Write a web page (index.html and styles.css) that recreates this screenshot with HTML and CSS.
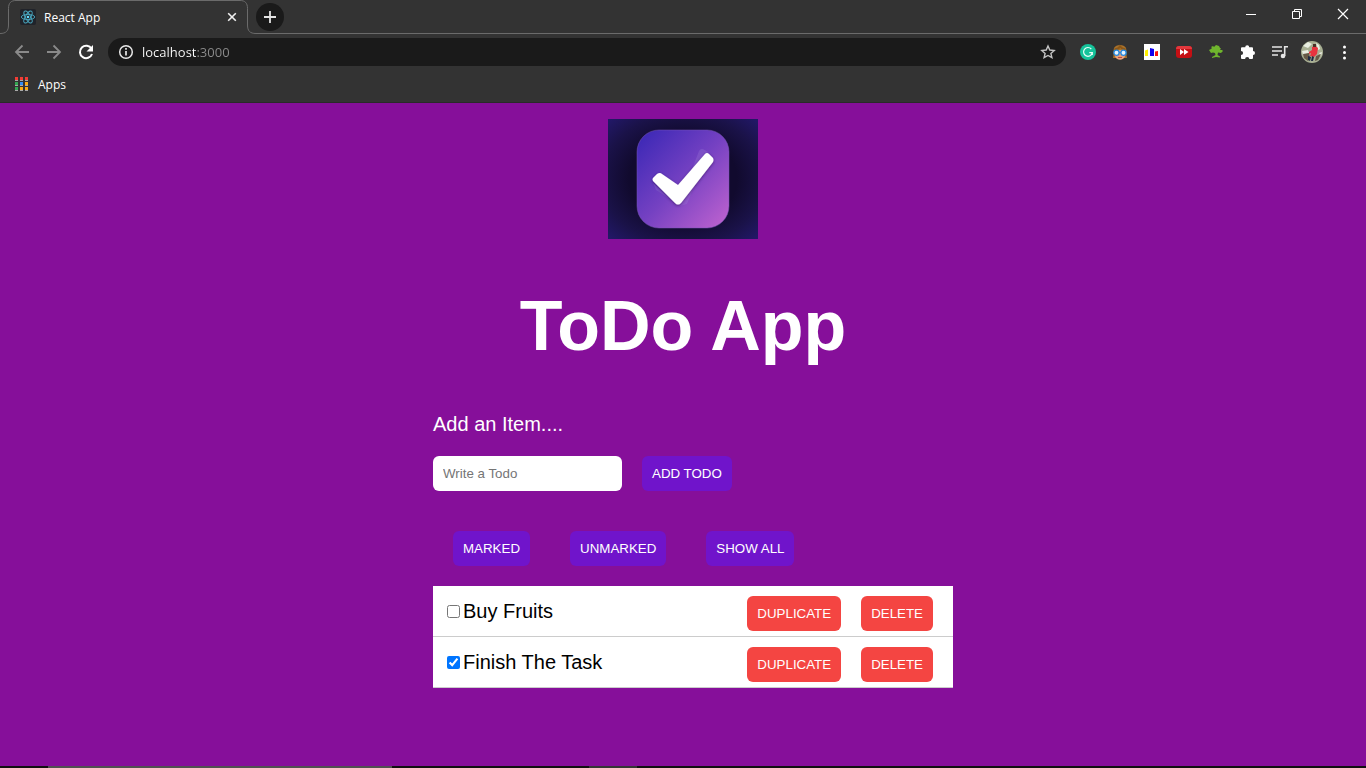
FILE: index.html
```html
<!DOCTYPE html>
<html lang="en">
<head>
<meta charset="utf-8">
<title>React App</title>
<link rel="stylesheet" href="styles.css">
</head>
<body>
<header class="browser">
  <div class="tabstrip">
    <div class="tab">
      <svg class="tab-shape" width="256" height="34" viewBox="0 0 256 34" fill="none" stroke="#6b6b6b"><path d="M0 33.5C6 33.5 8.500 31 8.500 25V8.500C8.500 3 11 .5 16 .5H240C245 .5 247.500 3 247.500 8.500V25C247.500 31 250 33.500 256 33.500"/></svg>
      <svg class="tab-icon" width="16" height="16" viewBox="0 0 16 16"><rect width="16" height="16" rx="2" fill="#20232a"/><g fill="none" stroke="#4aa9c2" stroke-width=".9"><ellipse cx="8" cy="8" rx="6.700" ry="2.600"/><ellipse cx="8" cy="8" rx="6.700" ry="2.600" transform="rotate(60 8 8)"/><ellipse cx="8" cy="8" rx="6.700" ry="2.600" transform="rotate(120 8 8)"/></g><circle cx="8" cy="8" r="1.300" fill="#61dafb"/></svg>
      <span class="tab-title">React App</span>
      <button class="tab-close" aria-label="Close tab"><svg width="16" height="16" viewBox="0 0 16 16" stroke="#f1f1f1" stroke-width="1.600"><path d="M4.200 4.200l7.600 7.600M11.800 4.200l-7.600 7.600"/></svg></button>
    </div>
    <div class="strip-rest">
      <button class="new-tab" aria-label="New tab"><svg width="16" height="16" viewBox="0 0 16 16" stroke="#e4e4e4" stroke-width="1.800"><path d="M8 2v12M2 8h12"/></svg></button>
      <div class="window-controls">
        <button class="win" aria-label="Minimize"><svg width="12" height="12" viewBox="0 0 12 12" stroke="#fff"><path d="M1 6.500h10"/></svg></button>
        <button class="win" aria-label="Restore"><svg width="12" height="12" viewBox="0 0 12 12" fill="none" stroke="#fff"><path d="M1.500 3.500h7v7h-7zM3.500 3.500v-2h7v7h-2"/></svg></button>
        <button class="win" aria-label="Close"><svg width="12" height="12" viewBox="0 0 12 12" stroke="#fff" stroke-width="1.200"><path d="M1 1l10 10M11 1L1 11"/></svg></button>
      </div>
    </div>
  </div>
  <div class="toolbar">
    <button class="tool" aria-label="Back"><svg width="16" height="16" viewBox="0 0 16 16" fill="none" stroke="#8a8a8a" stroke-width="1.800"><path d="M15 8H2M8.500 1.500L2 8l6.500 6.500"/></svg></button>
    <button class="tool" aria-label="Forward"><svg width="16" height="16" viewBox="0 0 16 16" fill="none" stroke="#8a8a8a" stroke-width="1.800"><path d="M1 8h13M7.500 1.500L14 8l-6.500 6.500"/></svg></button>
    <button class="tool" aria-label="Reload"><svg width="16" height="16" viewBox="0 0 16 16"><path d="M13.500 4.800A6.200 6.200 0 1 0 14 10" fill="none" stroke="#fff" stroke-width="2"/><path d="M15 1v6.500H8.500z" fill="#fff"/></svg></button>
    <div class="omnibox">
      <svg width="16" height="16" viewBox="0 0 16 16" fill="none" stroke="#e8e8e8"><circle cx="8" cy="8" r="6.300" stroke-width="1.500"/><path d="M8 7v4.500M8 4v1.700" stroke-width="1.700"/></svg>
      <input class="address" type="text" aria-label="Address" value="localhost:3000">
      <button class="star" aria-label="Bookmark this page"><svg width="16" height="16" viewBox="0 0 16 16" fill="none" stroke="#c4c4c4" stroke-width="1.400"><path d="M8 2l1.800 4 4.400.5-3.300 2.900 1 4.300L8 11.500l-3.900 2.200 1-4.300L1.800 6.500 6.200 6z"/></svg></button>
    </div>
    <button class="tool" aria-label="Grammarly"><svg width="16" height="16" viewBox="0 0 16 16"><circle cx="8" cy="8" r="8" fill="#15c39a"/><path d="M11.300 5A4.400 4.400 0 1 0 12.300 8.700H9.300M12.300 8.500v2.500" fill="none" stroke="#e8fff8" stroke-width="1.200"/></svg></button>
    <button class="tool" aria-label="Glasses extension"><svg width="16" height="16" viewBox="0 0 16 16"><path d="M1 14C2 10 1 7 2 4 4 0 12 0 14 4c1 3 0 6 1 10z" fill="#a8702a"/><path d="M3 6h10v6c-1 5-9 5-10 0z" fill="#e8a27a"/><path d="M2.500 5.500C5 5 7 4.500 8 2.500 9 4 11 5 13.500 5.500" stroke="#8a5718" stroke-width="2" fill="none"/><g fill="#e6f4ff" stroke="#2288df" stroke-width="1.300"><circle cx="4.500" cy="8.700" r="2.600"/><circle cx="11.500" cy="8.700" r="2.600"/></g><path d="M7 8.500h2" stroke="#2288df"/><path d="M6 13.500h4" stroke="#b84b43"/></svg></button>
    <button class="tool" aria-label="Charts extension"><svg width="16" height="16" viewBox="0 0 16 16"><path fill="#fff" d="M0 0h16v16H0z"/><path fill="#ffef00" d="M1 6.500l3-1V12H1z"/><path fill="#1100ef" d="M6 4l4 1v7H6z"/><path fill="#fa1111" d="M11 7.500l3-.5v5h-3z"/></svg></button>
    <button class="tool" aria-label="Skip extension"><svg width="16" height="16" viewBox="0 0 16 16"><rect y="2" width="16" height="12" rx="3" fill="#c50f14"/><path d="M0 5q0-3 3-3h10q3 0 3 3z" fill="#e2383d"/><path fill="#fff" d="M4 5l4 3-4 3zM8 5l4.500 3L8 11z"/></svg></button>
    <button class="tool" aria-label="Tree extension"><svg width="16" height="16" viewBox="0 0 16 16" fill="#6fb52d"><path d="M1 6l2-1 1-1-1-1 2-1 1 1 2-2 3 1 1 2 1 .5L12 6l2 0 1 1-2 2-3-.5L9.500 11l2.500 1.500v1L8 13l-4 1v-1l3.500-2L7 9 5 8.500 3 9 2 7.500z"/></svg></button>
    <button class="tool" aria-label="Extensions"><svg width="16" height="16" viewBox="0 0 16 16" fill="#fff"><path d="M5.200 3.200a2 2 0 0 1 4 0H12q1 0 1 1v2.700a2 2 0 0 1 0 4V14q0 1-1 1H9.300a2.100 2.100 0 0 0-4.200 0H2q-1 0-1-1v-2.900a2.100 2.100 0 0 0 0-4.200V4.200q0-1 1-1z"/></svg></button>
    <button class="tool" aria-label="Media control"><svg width="18" height="16" viewBox="0 0 18 16" fill="none" stroke="#e6e6e6" stroke-width="1.600"><path d="M1 3h10M1 7h10M1 11h6M13.700 12V2.800H17"/><circle cx="12" cy="12" r="2.300" fill="#e6e6e6" stroke="none"/></svg></button>
    <button class="tool" aria-label="Profile"><svg width="22" height="22" viewBox="0 0 22 22"><circle cx="11" cy="11" r="11" fill="#a9b094"/><path d="M2 5l5-4 4 2-4 4zM15 2l3 2 1 4-2 1zM1 10l6-1 1 3-6 2zM18 12l3-1-1 4z" fill="#e9eee2"/><path d="M2 13l6-1 1 5-2 3-4-3zM15 15l5-2-3 6-3 1z" fill="#665946"/><path d="M11 6l3-1 3 2-1 6-3 3-4-1 1-3-2 1 0-2 3-2z" fill="#e8333e"/><path d="M12 3h3v3h-3z" fill="#493027"/><path d="M7 15l3 1-1 4-2-1zM11 15l2 1-1 4h-2z" fill="#1e2a42"/></svg></button>
    <button class="tool" aria-label="Menu"><svg width="16" height="16" viewBox="0 0 16 16" fill="#fff"><circle cx="8.500" cy="3" r="1.500"/><circle cx="8.500" cy="8.500" r="1.500"/><circle cx="8.500" cy="14" r="1.500"/></svg></button>
  </div>
  <nav class="bookmarks">
    <a class="bookmark" href="#"><svg width="14" height="14" viewBox="0 0 14 14"><path fill="#f23d35" d="M0 0h3v3H0zM5 0h3v3H5zM10 0h3v3h-3z"/><path fill="#a9a9a9" d="M0 3h3v1H0zM5 3h3v1H5zM10 3h3v1h-3zM0 8h3v1H0zM5 8h3v1H5zM10 8h3v1h-3zM0 13h3v1H0zM5 13h3v1H5zM10 13h3v1h-3z"/><path fill="#34a853" d="M0 5h3v3H0zM0 10h3v3H0z"/><path fill="#2e8df5" d="M5 5h3v3H5z"/><path fill="#f9ab12" d="M10 5h3v3h-3zM5 10h3v3H5zM10 10h3v3h-3z"/></svg>Apps</a>
  </nav>
</header>
<main class="page">
  <svg class="logo" width="150" height="120" viewBox="0 0 150 120" role="img" aria-label="Todo logo">
    <defs>
      <radialGradient id="night" cx=".5" cy=".5" r=".72"><stop offset=".5" stop-color="#110a2e"/><stop offset=".75" stop-color="#1a1248"/><stop offset="1" stop-color="#23196c"/></radialGradient>
      <linearGradient id="tile" x1="0" y1="0" x2="1" y2="1"><stop offset="0" stop-color="#3726b5"/><stop offset=".5" stop-color="#7541c2"/><stop offset="1" stop-color="#c264d0"/></linearGradient>
      <filter id="shade" x="-20%" y="-20%" width="140%" height="150%"><feDropShadow dx="0" dy="1" stdDeviation="1.500" flood-color="#26104e" flood-opacity=".6"/></filter>
    </defs>
    <path fill="url(#night)" d="M0 0h150v120H0z"/>
    <rect x="29" y="11" width="92" height="98" rx="22" fill="url(#tile)" stroke="#7a55b8" stroke-opacity=".5"/>
    <path d="M81 58L91 32q2-3 4-2l5 3L79 85l-7 2zM45 64l3 7 14 9z" fill="#a98be0" opacity=".22"/>
    <path d="M45 62q-1-2 0-3l4-4q3-2 5 0l16 11 27-31q2-2 4 0l4 4q1 2 0 4L73 84q-3 3-6 0z" fill="#fff" filter="url(#shade)"/>
  </svg>
  <h1 class="title">ToDo App</h1>
  <div class="todo">
    <form class="add" onsubmit="return false">
      <label class="add-label" for="item">Add an Item....</label>
      <div class="add-row">
        <input class="add-input" id="item" type="text" placeholder="Write a Todo">
        <button class="btn" type="submit">ADD TODO</button>
      </div>
    </form>
    <div class="filters">
      <button class="btn">MARKED</button>
      <button class="btn">UNMARKED</button>
      <button class="btn">SHOW ALL</button>
    </div>
    <ul class="list">
      <li class="item">
        <label class="item-label"><input class="check" type="checkbox">Buy Fruits</label>
        <div class="actions"><button class="btn btn-red">DUPLICATE</button><button class="btn btn-red">DELETE</button></div>
      </li>
      <li class="item">
        <label class="item-label"><input class="check" type="checkbox" checked>Finish The Task</label>
        <div class="actions"><button class="btn btn-red">DUPLICATE</button><button class="btn btn-red">DELETE</button></div>
      </li>
    </ul>
  </div>
</main>
<footer class="taskbar"><span class="task-search"></span><span class="task-active"></span></footer>
</body>
</html>
```
FILE: styles.css
```css
* { box-sizing: border-box; }

body {
  margin: 0;
  min-height: 100vh;
  display: flex;
  flex-direction: column;
  background: #860f9a;
  font-family: "Liberation Sans", Arial, sans-serif;
}

button {
  border: 0;
  padding: 0;
  background: none;
  font-family: inherit;
}

svg { display: block; flex: none; }

/* Browser frame */
.browser {
  background: #333333;
  color: #ffffff;
  border-bottom: 1px solid #2a2a2a;
  font-family: "Open Sans", "Noto Sans", sans-serif;
  font-size: 12px;
}

.tabstrip { display: flex; height: 34px; }

.tab {
  position: relative;
  display: flex;
  align-items: center;
  width: 256px;
  padding: 0 16px 0 20px;
  gap: 8px;
}

.tab-shape { position: absolute; left: 0; top: 0; }
.tab-title { flex: 1; }
.tab-close, .new-tab, .win, .tool, .star {
  display: flex;
  align-items: center;
  justify-content: center;
}

.strip-rest {
  flex: 1;
  display: flex;
  justify-content: space-between;
  border-bottom: 1px solid #6b6b6b;
}

.new-tab {
  width: 28px;
  height: 28px;
  margin-top: 3px;
  border-radius: 50%;
  background: #1a1a1a;
}

.window-controls { display: flex; height: 28px; }
.win { width: 46px; }

.toolbar {
  display: flex;
  align-items: center;
  height: 36px;
  padding: 0 6px;
}

.tool { width: 32px; height: 28px; }

.omnibox {
  flex: 1;
  display: flex;
  align-items: center;
  gap: 8px;
  height: 28px;
  margin: 0 6px;
  padding: 0 10px;
  border-radius: 14px;
  background: #1a1a1a;
}

.address {
  flex: 1;
  min-width: 0;
  border: 0;
  padding: 0;
  outline: 0;
  font: 13px/20px "Open Sans", "Noto Sans", sans-serif;
  color: transparent;
  background: linear-gradient(90deg, #ffffff 54px, #8c8c8c 54px);
  background-clip: text;
  -webkit-background-clip: text;
}

.bookmarks {
  display: flex;
  align-items: center;
  height: 28px;
  margin-bottom: 4px;
  padding: 0 15px;
}

.bookmark {
  display: flex;
  align-items: center;
  gap: 9px;
  color: #ffffff;
  text-decoration: none;
}

/* Todo app */
.page {
  flex: 1;
  display: flex;
  flex-direction: column;
  align-items: center;
  padding: 16px 20px 0;
  color: #ffffff;
}

.title {
  margin: 47px 0;
  font-size: 70px;
  line-height: 80px;
}

.todo { width: 100%; max-width: 500px; }

.add-label {
  display: block;
  margin-bottom: 20px;
  font-size: 20px;
  line-height: 23px;
}

.add-row { display: flex; gap: 20px; }

.add-input {
  width: 189px;
  height: 35px;
  border: 0;
  border-radius: 6px;
  padding: 10px;
  font-family: inherit;
}

.btn {
  height: 35px;
  padding: 0 10px;
  border-radius: 6px;
  background: #7014cb;
  color: #ffffff;
}

.btn-red { background: #f44542; }

.filters {
  display: flex;
  gap: 40px;
  margin: 40px 20px 20px;
}

.list {
  list-style: none;
  margin: 0 -20px 0 0;
  padding: 0;
  background: #ffffff;
  color: #000000;
}

.item {
  display: flex;
  align-items: center;
  justify-content: space-between;
  padding: 0 20px 0 14px;
  border-bottom: 1px solid #cccccc;
}

.item-label {
  display: flex;
  align-items: center;
  gap: 3px;
  font-size: 20px;
  line-height: 23px;
}

.check { width: 13px; height: 13px; margin: 0; }

.actions {
  display: flex;
  gap: 20px;
  padding: 10px 0 5px;
}

/* Top edge of the desktop taskbar */
.taskbar {
  display: flex;
  gap: 197px;
  height: 2px;
  padding-left: 48px;
  background: #101010;
}

.task-search { width: 344px; background: #505050; }
.task-active { width: 48px; background: #353535; }
```
